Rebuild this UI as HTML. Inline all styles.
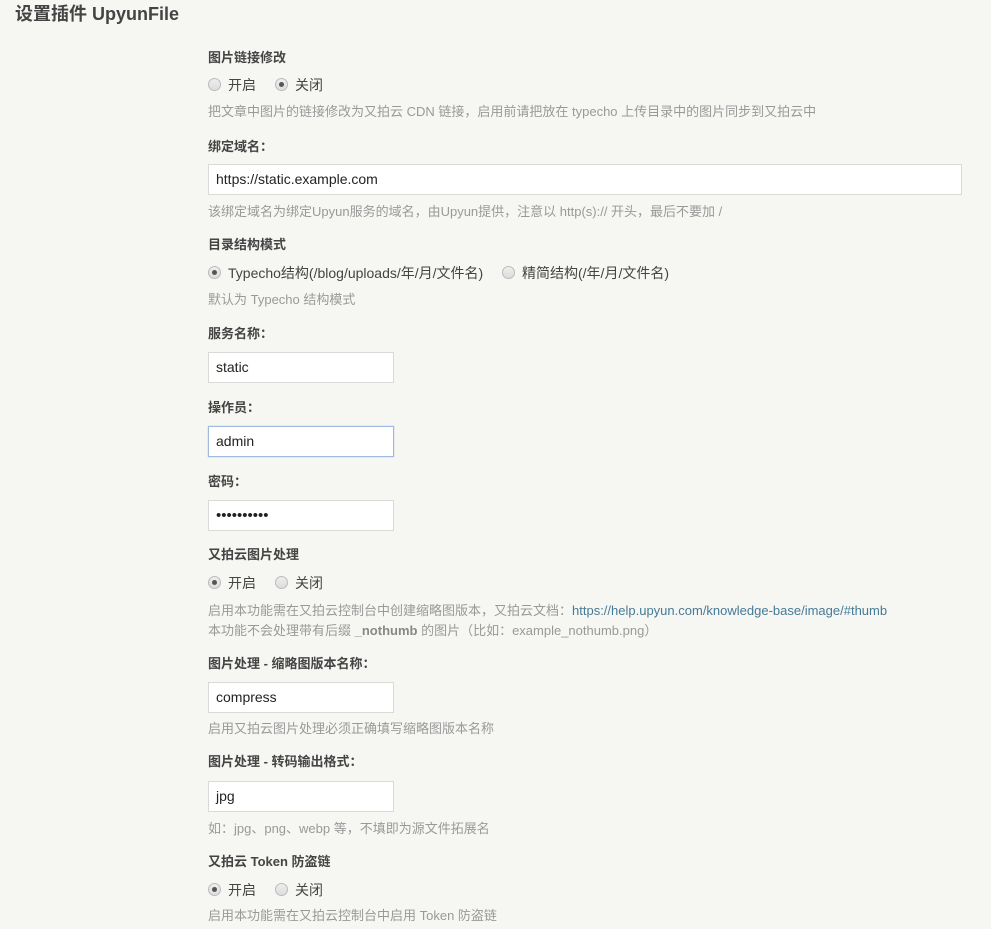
<!DOCTYPE html>
<html><head><meta charset="utf-8"><style>
body{margin:0;width:991px;height:929px;background:#f6f6f3;font-family:"Liberation Sans","Noto Sans CJK SC",sans-serif;color:#444;position:relative;overflow:hidden}
.a{position:absolute;white-space:nowrap;line-height:18px;font-size:13px}
.t{left:15px;top:3px;font-size:18px;font-weight:bold;line-height:22px;color:#444}
.l{left:208px;font-weight:bold;color:#444}
.d{left:208px;color:#999}
.d a{color:#467b96;text-decoration:none}
.i{position:absolute;left:208px;height:29px;background:#fff;border:1px solid #d9d9d6;box-sizing:content-box;font-size:14px;line-height:29px;padding:0 0 0 7px;color:#222;font-family:"Liberation Sans",sans-serif}
.f{border-color:#9fb9e0;box-shadow:0 0 1px #9fb9e0}
.r{position:absolute;width:11px;height:11px;border:1px solid #bbb;border-radius:50%;background:linear-gradient(#eee,#ddd)}
.r.c::after{content:"";position:absolute;left:3px;top:3px;width:5px;height:5px;border-radius:50%;background:#555}
.o{color:#444;font-size:14px}
</style></head><body>
<div class="a t">设置插件 UpyunFile</div>

<div class="a l" style="top:49px">图片链接修改</div>
<span class="r" style="left:208px;top:78px"></span><div class="a o" style="left:228px;top:76px">开启</div>
<span class="r c" style="left:275px;top:78px"></span><div class="a o" style="left:295px;top:76px">关闭</div>
<div class="a d" style="top:103px">把文章中图片的链接修改为又拍云 CDN 链接，启用前请把放在 typecho 上传目录中的图片同步到又拍云中</div>

<div class="a l" style="top:138px">绑定域名：</div>
<div class="i" style="top:164px;width:745px">https://static.example.com</div>
<div class="a d" style="top:203px">该绑定域名为绑定Upyun服务的域名，由Upyun提供，注意以 http(s):// 开头，最后不要加 /</div>

<div class="a l" style="top:236px">目录结构模式</div>
<span class="r c" style="left:208px;top:266px"></span><div class="a o" style="left:228px;top:264px">Typecho结构(/blog/uploads/年/月/文件名)</div>
<span class="r" style="left:502px;top:266px"></span><div class="a o" style="left:522px;top:264px">精简结构(/年/月/文件名)</div>
<div class="a d" style="top:291px">默认为 Typecho 结构模式</div>

<div class="a l" style="top:325px">服务名称：</div>
<div class="i" style="top:352px;width:177px">static</div>

<div class="a l" style="top:399px">操作员：</div>
<div class="i f" style="top:426px;width:177px">admin</div>

<div class="a l" style="top:473px">密码：</div>
<div class="i" style="top:500px;width:177px;font-size:15px">••••••••••</div>

<div class="a l" style="top:546px">又拍云图片处理</div>
<span class="r c" style="left:208px;top:576px"></span><div class="a o" style="left:228px;top:574px">开启</div>
<span class="r" style="left:275px;top:576px"></span><div class="a o" style="left:295px;top:574px">关闭</div>
<div class="a d" style="top:602px">启用本功能需在又拍云控制台中创建缩略图版本，又拍云文档：<a>https://help.upyun.com/knowledge-base/image/#thumb</a></div>
<div class="a d" style="top:622px">本功能不会处理带有后缀 <b style="color:#888">_nothumb</b> 的图片（比如：example_nothumb.png）</div>

<div class="a l" style="top:655px">图片处理 - 缩略图版本名称：</div>
<div class="i" style="top:682px;width:177px">compress</div>
<div class="a d" style="top:720px">启用又拍云图片处理必须正确填写缩略图版本名称</div>

<div class="a l" style="top:753px">图片处理 - 转码输出格式：</div>
<div class="i" style="top:781px;width:177px">jpg</div>
<div class="a d" style="top:820px">如：jpg、png、webp 等，不填即为源文件拓展名</div>

<div class="a l" style="top:853px">又拍云 Token 防盗链</div>
<span class="r c" style="left:208px;top:883px"></span><div class="a o" style="left:228px;top:881px">开启</div>
<span class="r" style="left:275px;top:883px"></span><div class="a o" style="left:295px;top:881px">关闭</div>
<div class="a d" style="top:907px">启用本功能需在又拍云控制台中启用 Token 防盗链</div>
</body></html>
